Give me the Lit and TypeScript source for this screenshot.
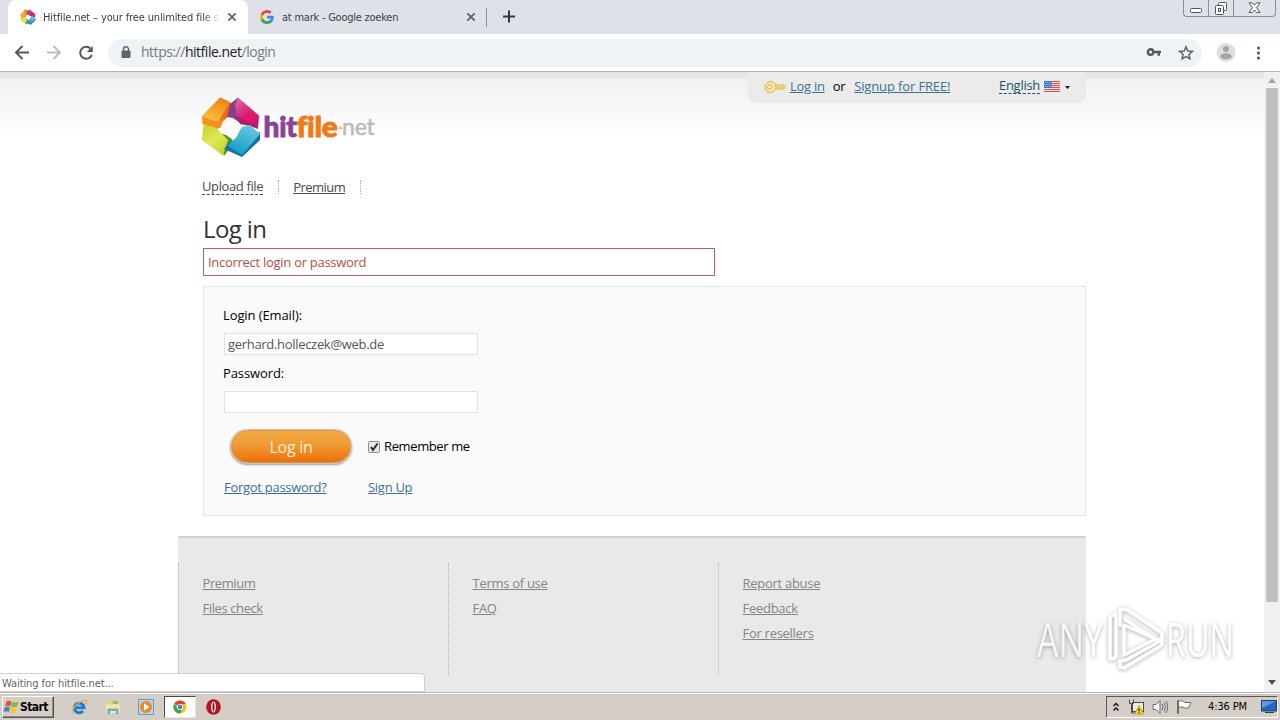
import { LitElement, css, html, svg } from "lit";

type FooterColumn = string[];

const footerColumns: FooterColumn[] = [
  ["Premium", "Files check"],
  ["Terms of use", "FAQ"],
  ["Report abuse", "Feedback", "For resellers"]
];

const logoMark = svg`
  <defs>
    <linearGradient id="orange" x1="0.8" y1="0" x2="0.3" y2="1">
      <stop offset="0" stop-color="#f07d15"></stop>
      <stop offset="1" stop-color="#fbc33c"></stop>
    </linearGradient>
    <linearGradient id="pink" x1="0.2" y1="0" x2="0.9" y2="1">
      <stop offset="0" stop-color="#d868a6"></stop>
      <stop offset="0.55" stop-color="#de1c70"></stop>
      <stop offset="1" stop-color="#e0115f"></stop>
    </linearGradient>
    <linearGradient id="blue" x1="0.7" y1="0" x2="0.3" y2="1">
      <stop offset="0" stop-color="#6cc8e0"></stop>
      <stop offset="1" stop-color="#109cc4"></stop>
    </linearGradient>
    <linearGradient id="lime" x1="0.2" y1="0" x2="0.8" y2="1">
      <stop offset="0" stop-color="#cbd52a"></stop>
      <stop offset="0.5" stop-color="#e2e65a"></stop>
      <stop offset="1" stop-color="#c3d11c"></stop>
    </linearGradient>
  </defs>
  <path fill="#ec6a12" d="M20 1.500 33 8 31 15 28 21 23 25 20 32 14 31 18 16Z"></path>
  <path fill="url(#orange)" d="M20 1.500 30 6 18 26 2 20Z"></path>
  <path fill="#f5901c" d="M2 20 18 26 24 21 20 32 15 33 2.500 28Z"></path>
  <path fill="#84408f" d="M38 1.500 30 8 27 21 33 22 40 27 44 17 43 8Z"></path>
  <path fill="#b51c68" d="M37 19 52 27 59 20 58 33 50 30 40 28Z"></path>
  <path fill="url(#pink)" d="M38 1.500 59.500 20 53 28 37 20 35 9Z"></path>
  <path fill="#4b9a2f" d="M17 32 19 37 26 39 32 43 33 48 24 60 20 50Z"></path>
  <path fill="url(#lime)" d="M3.500 28 16 32 28 44 23 59.500 2 44Z"></path>
  <path fill="#176fa8" d="M60 36 60 44 42 61 24 53 30 46Z"></path>
  <path fill="url(#blue)" d="M42 31 50 29 60 38 42 59 28 50 33 44 36 42 39 36Z"></path>
`;

@customElementSafe("hitfile-logo")
class HitfileLogo extends LitElement {
  static styles = css`
    :host {
      display: block;
      height: 62px;
      width: 180px;
    }

    .word {
      font-family: Lato, "Open Sans", sans-serif;
      font-size: 29px;
      font-weight: 900;
      stroke-width: 0.9;
    }

    .hit {
      fill: #8a4298;
      stroke: #8a4298;
    }

    .file {
      fill: #ef7b14;
      stroke: #ef7b14;
    }

    .net {
      fill: #b9b9bb;
      font-size: 24px;
      font-weight: 400;
      stroke: #b9b9bb;
      stroke-width: 0.5;
    }
  `;

  protected render() {
    return html`
      <svg width="180" height="62" viewBox="0 0 180 62">
        ${logoMark}
        <text class="word hit" x="63.500" y="40.500" textLength="33" lengthAdjust="spacingAndGlyphs">hit</text>
        <text class="word file" x="96.500" y="40.500" textLength="41" lengthAdjust="spacingAndGlyphs">file</text>
        <circle cx="140.500" cy="32" r="1.600" fill="#f0b27a"></circle>
        <text class="word net" x="142" y="39" textLength="32.500" lengthAdjust="spacingAndGlyphs">net</text>
      </svg>
    `;
  }
}

@customElementSafe("browser-chrome")
class BrowserChrome extends LitElement {
  static styles = css`
    :host {
      display: block;
      font: 11px/14px "DejaVu Sans Condensed", "DejaVu Sans", sans-serif;
      color: #3c4043;
    }

    svg {
      display: block;
      flex: none;
    }

    .tabs {
      align-items: stretch;
      background: #dee1e8;
      display: flex;
      height: 34px;
    }

    .tab {
      align-items: center;
      box-sizing: border-box;
      display: flex;
      padding-left: 12px;
      width: 240px;
    }

    .tab.active {
      background: #fff;
      border-radius: 8px 8px 0 0;
      margin-left: 8px;
    }

    .tab-title {
      letter-spacing: -0.13px;
      margin: 1px 0 0 7px;
      overflow: hidden;
      white-space: nowrap;
      width: 177px;
    }

    .tab.active .tab-title {
      -webkit-mask-image: linear-gradient(to right, #000 160px, transparent 178px);
    }

    .tab.other .tab-title {
      letter-spacing: -0.23px;
      margin-left: 8px;
      width: 184px;
    }

    .tab .close {
      margin-left: 7px;
    }

    .tab.other .close {
      margin-left: 0;
    }

    .divider {
      background: #8b8f96;
      margin: 8px 0 7px -2px;
      width: 1px;
    }

    .plus {
      margin: 10px 0 0 16px;
    }

    .window-buttons {
      border: 1px solid #8b8e94;
      border-radius: 0 0 4px 4px;
      border-top: 0;
      box-sizing: border-box;
      display: flex;
      height: 17px;
      margin-left: auto;
      margin-right: 4px;
    }

    .window-button {
      align-items: center;
      display: flex;
      justify-content: center;
      width: 24px;
    }

    .window-button + .window-button {
      border-left: 1px solid #8b8e94;
    }

    .window-button.exit {
      width: 41px;
    }

    .toolbar {
      align-items: center;
      background: #fff;
      border-bottom: 1px solid #b1b3b0;
      box-sizing: border-box;
      display: flex;
      height: 38px;
      padding: 0 12px;
    }

    .nav {
      display: flex;
      gap: 12px;
    }

    .omnibox {
      align-items: center;
      background: #f0f3f5;
      border-radius: 14px;
      box-sizing: border-box;
      display: flex;
      flex: none;
      height: 28px;
      margin-left: 12px;
      padding: 0 8px 0 10px;
      width: 1094px;
    }

    .url {
      color: #777b80;
      font: 14px/20px "Open Sans", sans-serif;
      letter-spacing: -0.48px;
      margin: -2px 0 0 7px;
    }

    .host {
      color: #202124;
    }

    .key {
      margin-left: auto;
      margin-right: 16px;
    }

    .avatar {
      margin-left: 14px;
    }

    .menu {
      margin-left: 15px;
    }
  `;

  private renderCross() {
    return html`
      <svg class="close" width="10" height="10" viewBox="0 0 10 10" stroke="#5f6368" stroke-width="1.800">
        <path d="M1.300 1.300l7.400 7.400M8.700 1.300l-7.400 7.400"></path>
      </svg>
    `;
  }

  protected render() {
    return html`
      <div class="tabs">
        <div class="tab active">
          <svg width="16" height="16" viewBox="0 0 62 62">${logoMark}</svg>
          <span class="tab-title">Hitfile.net – your free unlimited file s</span>
          ${this.renderCross()}
        </div>
        <div class="tab other">
          <svg width="14" height="14" viewBox="0 0 24 24">
            <path fill="#4285f4" d="M23.500 12.300c0-.8-.1-1.600-.2-2.300H12v4.500h6.500a5.500 5.500 0 0 1-2.400 3.600v3h3.900c2.200-2.100 3.500-5.100 3.500-8.800z"></path>
            <path fill="#34a853" d="M12 24c3.200 0 6-1.100 8-2.900l-3.900-3c-1.100.7-2.500 1.200-4.100 1.200-3.100 0-5.800-2.100-6.700-5H1.300v3.100A12 12 0 0 0 12 24z"></path>
            <path fill="#fbbc05" d="M5.300 14.300a7.200 7.200 0 0 1 0-4.600V6.600h-4a12 12 0 0 0 0 10.800z"></path>
            <path fill="#ea4335" d="M12 4.800c1.800 0 3.300.6 4.600 1.800L20 3.200A12 12 0 0 0 1.300 6.600l4 3.100c.9-2.900 3.600-4.900 6.700-4.900z"></path>
          </svg>
          <span class="tab-title">at mark - Google zoeken</span>
          ${this.renderCross()}
        </div>
        <div class="divider"></div>
        <svg class="plus" width="12" height="13" viewBox="0 0 12 13" stroke="#35383c" stroke-width="2">
          <path d="M6 .5v12M0 6.500h12"></path>
        </svg>
        <div class="window-buttons">
          <div class="window-button">
            <svg width="12" height="12" viewBox="0 0 12 12"><rect x="0.500" y="6.500" width="11" height="4" rx="1" fill="#fff" stroke="#50545c"></rect></svg>
          </div>
          <div class="window-button">
            <svg width="14" height="14" viewBox="0 0 14 14" fill="#fff" stroke="#50545c">
              <rect x="4.500" y="1.500" width="8" height="8" rx="1"></rect>
              <rect x="1.500" y="4.500" width="8" height="9" rx="1"></rect>
              <rect x="4.500" y="7.500" width="2" height="3"></rect>
            </svg>
          </div>
          <div class="window-button exit">
            <svg width="13" height="12" viewBox="0 0 13 12" fill="#fff" stroke="#50545c">
              <path d="M1 .8h3.300l2.200 2.400L8.700.8H12L8.600 5.700l3.400 4.800H8.700L6.500 8.100l-2.200 2.400H1l3.400-4.800z"></path>
            </svg>
          </div>
        </div>
      </div>
      <div class="toolbar">
        <div class="nav">
          <svg width="20" height="20" viewBox="0 0 20 20" fill="none" stroke="#55595d" stroke-width="2"><path d="M17 9.500H4M10.500 3 4 9.500l6.500 6.500"></path></svg>
          <svg width="20" height="20" viewBox="0 0 20 20" fill="none" stroke="#bcbec0" stroke-width="2"><path d="M3 9.500h13M9.500 3 16 9.500 9.500 16"></path></svg>
          <svg width="20" height="20" viewBox="0 0 20 20" fill="none" stroke="#55595d" stroke-width="2">
            <path d="M14.600 5.700A6 6 0 1 0 15.800 11.800"></path>
            <path d="M16.800 3v6h-6z" fill="#55595d" stroke="none"></path>
          </svg>
        </div>
        <div class="omnibox">
          <svg width="16" height="16" viewBox="0 0 16 16">
            <rect x="3.500" y="5.500" width="9" height="7.500" rx="1" fill="#5f6368"></rect>
            <path d="M5.500 6V4.300a2.500 2.500 0 0 1 5 0V6" fill="none" stroke="#5f6368" stroke-width="1.400"></path>
          </svg>
          <span class="url">https://<span class="host">hitfile.net</span>/login</span>
          <svg class="key" width="16" height="16" viewBox="0 0 16 16">
            <circle cx="4.600" cy="7" r="2.700" fill="none" stroke="#55595d" stroke-width="2.400"></circle>
            <path d="M7 5.800h8v2.400h-1v2.500h-2.500V8.200H7z" fill="#55595d"></path>
          </svg>
          <svg width="16" height="16" viewBox="0 0 16 16" fill="none" stroke="#5f6368" stroke-width="1.500">
            <path d="M8 1.800 9.800 6l4.500.4-3.400 3 1 4.400L8 11.500l-3.900 2.300 1-4.400-3.400-3L6.200 6z"></path>
          </svg>
        </div>
        <svg class="avatar" width="20" height="20" viewBox="0 0 20 20">
          <circle cx="10" cy="9.500" r="9.500" fill="#dedede"></circle>
          <circle cx="10" cy="6" r="3" fill="#a2a4a6"></circle>
          <ellipse cx="10" cy="13.300" rx="5.800" ry="3" fill="#a2a4a6"></ellipse>
        </svg>
        <svg class="menu" width="16" height="16" viewBox="0 0 16 16" fill="#4d5155">
          <circle cx="7.500" cy="3" r="1.500"></circle>
          <circle cx="7.500" cy="8" r="1.500"></circle>
          <circle cx="7.500" cy="13" r="1.500"></circle>
        </svg>
      </div>
    `;
  }
}

@customElementSafe("login-page")
class LoginPage extends LitElement {
  static styles = css`
    :host {
      background: linear-gradient(#e6e6e6 0 6px, #f1f1f1 7px, #fff 66px);
      display: flex;
      flex-direction: column;
      font: 13px/18px "Open Sans", "Noto Sans", sans-serif;
      letter-spacing: -0.28px;
      overflow: hidden;
    }

    svg {
      display: block;
      flex: none;
    }

    .wrap {
      box-sizing: border-box;
      display: flex;
      flex: 1;
      flex-direction: column;
      margin: 0 auto;
      width: 908px;
    }

    .link {
      color: #3a7190;
      text-decoration: underline;
    }

    .user-bar {
      align-items: center;
      align-self: flex-end;
      background: #ebebeb;
      border-radius: 0 0 8px 8px;
      box-sizing: border-box;
      display: flex;
      height: 31px;
      padding: 0 16px 4px;
      width: 338px;
    }

    .user-bar .key {
      margin: 2px 4px 0 0;
    }

    .or {
      margin: 0 9px 0 8px;
    }

    .signup {
      letter-spacing: -0.13px;
    }

    .language {
      border-bottom: 1px dashed #1f4e6b;
      color: #1f4e6b;
      line-height: 15px;
      margin-left: auto;
    }

    .flag {
      margin: 1px 5px 0 4px;
    }

    .caret {
      margin-top: 4px;
    }

    .logo {
      margin: -7px 0 0 22px;
    }

    .menu {
      align-items: center;
      color: #4a4a4a;
      display: flex;
      height: 20px;
      margin: 19px 0 0 24px;
    }

    .menu-item {
      border-bottom: 1px dashed #4a4a4a;
      letter-spacing: -0.38px;
      line-height: 15px;
    }

    .menu-item.plain {
      border-bottom: 0;
      letter-spacing: -0.54px;
      line-height: 16px;
      text-decoration: underline;
    }

    .menu-divider {
      border-left: 1px dotted #aaa;
      height: 14px;
      margin: 0 14px 0 15px;
    }

    .title {
      color: #333;
      font: 24px/30px "Open Sans", "Noto Sans", sans-serif;
      letter-spacing: -0.6px;
      margin: 17px 0 0 25px;
    }

    .error {
      border: 1px solid #cd5a5a;
      box-sizing: border-box;
      color: #bf4b44;
      height: 28px;
      line-height: 27px;
      margin: 4px 0 0 25px;
      padding-left: 4px;
      width: 512px;
    }

    .form {
      background: #fafafa;
      border: 1px solid #e6e6e6;
      box-sizing: border-box;
      color: #000;
      display: flex;
      flex-direction: column;
      height: 230px;
      margin: 10px 0 0 25px;
      padding: 19px 20px 0 19px;
    }

    .field {
      display: block;
      height: 58px;
    }

    .label {
      letter-spacing: -0.1px;
    }

    .input {
      background: #fff;
      border: 1px solid #e2e2e2;
      box-sizing: border-box;
      color: #555;
      display: block;
      height: 22px;
      letter-spacing: -0.31px;
      line-height: 21px;
      margin: 9px 0 0 1px;
      padding-left: 3px;
      width: 254px;
    }

    .actions {
      align-items: center;
      display: flex;
      height: 38px;
      margin-top: 5px;
    }

    .submit {
      background: linear-gradient(#f2ac43, #ed9a35 45%, #f07c15 85%, #e37312);
      border: 1px solid #d98f45;
      border-radius: 18px;
      box-shadow: 0 0 1px 1px #d8c5ac, 0 1px 2px 1px #999;
      box-sizing: border-box;
      color: #fff3cf;
      font: 16px/33px "Open Sans", sans-serif;
      height: 33px;
      letter-spacing: -0.3px;
      margin-left: 8px;
      padding: 0;
      text-align: center;
      width: 120px;
    }

    .checkbox {
      margin: 2px 4px 0 17px;
    }

    .remember {
      letter-spacing: -0.38px;
    }

    .links {
      display: flex;
      margin: 13px 0 0 1px;
    }

    .forgot {
      width: 144px;
    }

    .footer {
      background: #e9e9e9;
      border-top: 2px solid #d2d2d2;
      box-sizing: border-box;
      display: flex;
      flex: 1;
      margin-top: 20px;
      padding-top: 25px;
    }

    .column {
      border-left: 1px dotted #b5b5b5;
      box-sizing: border-box;
      color: #858585;
      display: flex;
      flex-direction: column;
      gap: 7px;
      height: 112px;
      padding: 11px 0 0 23.5px;
      width: 270px;
    }

    .column-link {
      text-decoration: underline;
    }

    .column:first-child .column-link {
      letter-spacing: -0.4px;
    }
  `;

  protected render() {
    return html`
      <div class="wrap">
        <div class="user-bar">
          <svg class="key" width="22" height="14" viewBox="0 0 22 14" fill="#fbe3a0" stroke="#d9b34d">
            <path d="M11.500 5H20l1.500 1.700L20 9h-8.500M12 7h8"></path>
            <circle cx="6.500" cy="7" r="5.500"></circle>
            <circle cx="5.500" cy="7" r="2" fill="#fff6d8"></circle>
          </svg>
          <span class="link">Log in</span>
          <span class="or">or</span>
          <span class="link signup">Signup for FREE!</span>
          <span class="language">English</span>
          <svg class="flag" width="16" height="11" viewBox="0 0 16 11">
            <rect width="16" height="11" fill="#f6e3df"></rect>
            <path d="M0 .5h16M0 2.500h16M0 4.500h16M0 6.500h16M0 8.500h16M0 10.500h16" stroke="#d9534a"></path>
            <rect width="8" height="7" fill="#3f74d8"></rect>
            <path d="M1 1.500h7M0 3.500h7M1 5.500h7" stroke="#a9c4f5" stroke-dasharray="1 1"></path>
          </svg>
          <svg class="caret" width="5" height="3" viewBox="0 0 5 3"><path d="M0 0h5L2.500 3z" fill="#111"></path></svg>
        </div>
        <hitfile-logo class="logo"></hitfile-logo>
        <div class="menu">
          <span class="menu-item">Upload file</span>
          <span class="menu-divider"></span>
          <span class="menu-item plain">Premium</span>
          <span class="menu-divider"></span>
        </div>
        <div class="title">Log in</div>
        <div class="error">Incorrect login or password</div>
        <div class="form">
          <label class="field"><span class="label">Login (Email):</span><span class="input">gerhard.holleczek@web.de</span></label>
          <label class="field"><span class="label">Password:</span><span class="input"></span></label>
          <div class="actions">
            <button class="submit">Log in</button>
            <svg class="checkbox" width="12" height="12" viewBox="0 0 12 12">
              <rect x="0.500" y="0.500" width="11" height="11" rx="1" fill="#e8e8e8" stroke="#8e8e8e"></rect>
              <path d="M3 6l2 3 4.500-6.500" fill="none" stroke="#2b2b2b" stroke-width="2"></path>
            </svg>
            <span class="remember">Remember me</span>
          </div>
          <div class="links">
            <span class="forgot"><span class="link">Forgot password?</span></span>
            <span class="link">Sign Up</span>
          </div>
        </div>
        <div class="footer">
          ${footerColumns.map(
            (links) => html`<div class="column">${links.map((link) => html`<span><span class="column-link">${link}</span></span>`)}</div>`
          )}
        </div>
      </div>
    `;
  }
}

@customElementSafe("task-bar")
class TaskBar extends LitElement {
  static styles = css`
    :host {
      align-items: center;
      background: #d5cec6;
      border-top: 1px solid #b9b8b2;
      box-shadow: inset 0 1px #fff, inset 0 2px #c9c7bf;
      box-sizing: border-box;
      display: flex;
      font: 11px/14px "DejaVu Sans Condensed", sans-serif;
      height: 28px;
      padding: 0 2px;
    }

    svg {
      display: block;
      flex: none;
    }

    .start {
      align-items: center;
      border: 1px solid;
      border-color: #fff #55524e #55524e #fff;
      box-shadow: inset -1px -1px #8f8a84;
      box-sizing: border-box;
      display: flex;
      font-size: 12px;
      font-weight: bold;
      gap: 1px;
      height: 22px;
      letter-spacing: -0.55px;
      width: 52px;
    }

    .programs {
      display: flex;
      margin-left: 9px;
    }

    .program {
      align-items: center;
      box-sizing: border-box;
      display: flex;
      height: 22px;
      justify-content: center;
      margin-right: 1.5px;
      width: 32px;
    }

    .program.active {
      background: #fff;
      border: 1px solid;
      border-color: #4a4845 #e8e4de #e8e4de #4a4845;
    }

    .tray {
      align-items: center;
      border: 1px solid;
      border-color: #5b5955 #fff #fff #5b5955;
      box-sizing: border-box;
      display: flex;
      height: 22px;
      margin-left: auto;
      padding: 0 0 0 6px;
      width: 172px;
    }

    .network {
      margin-left: 9px;
    }

    .sound,
    .flag {
      margin-left: 8px;
    }

    .clock {
      letter-spacing: -0.12px;
      margin-left: 16px;
    }

    .desktop {
      margin-left: auto;
    }
  `;

  protected render() {
    return html`
      <div class="start">
        <svg width="16" height="16" viewBox="0 0 16 16">
          <path fill="#e6532a" d="M3.500 2.500Q6 1 8.500 2.700L7.200 7.500Q5 6 2 7.300z"></path>
          <path fill="#7db93c" d="M9.200 3Q12 4.500 15.500 2.500L14 7.500Q11 9 8 7.700z"></path>
          <path fill="#3e7fd0" d="M1.800 8.200Q4.500 7 7 8.500L5.600 13Q3.500 11.700.5 13z"></path>
          <path fill="#f7c52c" d="M7.800 8.700Q10.500 10 13.700 8.400L12.300 13Q9.500 15 6.400 13.500z"></path>
        </svg>
        <span>Start</span>
      </div>
      <div class="programs">
        <div class="program">
          <svg width="17" height="16" viewBox="0 0 17 16" fill="none">
            <path d="M3.500 8.800H13A4.800 4.800 0 1 0 12 12" stroke="#1f7fd1" stroke-width="3"></path>
            <path d="M2 14.500Q-1 12 6 5.500 13 0 15.500 1.500 16.500 2.500 14.500 5" stroke="#e0b53a" stroke-width="1.300"></path>
          </svg>
        </div>
        <div class="program">
          <svg width="16" height="16" viewBox="0 0 16 16">
            <path d="M1 2h5l1 2h7v10H1z" fill="#ecd478"></path>
            <path d="M8 2h5v3H8z" fill="#8bbf72"></path>
            <path d="M0.500 5.500h14l.500 8.500H1.500z" fill="#f6e8a4"></path>
            <path d="M2.500 15V9.500h11V15h-2.500v-3H5v3z" fill="#65aede"></path>
          </svg>
        </div>
        <div class="program">
          <svg width="16" height="16" viewBox="0 0 16 16">
            <rect x="0.500" y="0.500" width="15" height="15" fill="#b9d4ec" stroke="#5f9bd0"></rect>
            <circle cx="8" cy="8" r="6" fill="#f18a1e"></circle>
            <path d="M6 4.500 11.500 8 6 11.500z" fill="#fff"></path>
          </svg>
        </div>
        <div class="program active">
          <svg width="14" height="14" viewBox="0 0 14 14">
            <circle cx="7" cy="7" r="6.500" fill="#fbc116"></circle>
            <path d="M7 7 1.300 3.800A6.500 6.500 0 0 1 12.700 3.900H7z" fill="#e2402f"></path>
            <path d="M1.300 3.800A6.500 6.500 0 0 0 7 13.500L9 9.500 4.300 8.600z" fill="#36a350"></path>
            <circle cx="7" cy="7" r="3.100" fill="#fff"></circle>
            <circle cx="7" cy="7" r="2.400" fill="#4384ea"></circle>
          </svg>
        </div>
        <div class="program">
          <svg width="15" height="16" viewBox="0 0 15 16">
            <ellipse cx="7.500" cy="8" rx="7.300" ry="7.700" fill="#b5151b"></ellipse>
            <ellipse cx="7.500" cy="8" rx="2.400" ry="5.500" fill="#fff"></ellipse>
            <ellipse cx="7.500" cy="8" rx="1" ry="4.500" fill="#7d0d12"></ellipse>
          </svg>
        </div>
      </div>
      <div class="tray">
        <svg width="6" height="10" viewBox="0 0 6 10" fill="none" stroke="#111" stroke-width="1.400"><path d="M.5 4 3 1.500 5.500 4M.5 8.500 3 6l2.500 2.500"></path></svg>
        <svg class="network" width="16" height="16" viewBox="0 0 16 16">
          <rect x="4.500" y="3.500" width="11" height="9" fill="#e9e9e9" stroke="#4b4b4b"></rect>
          <path d="M1.500.5v4h4v-4M3.500 4.500v9.500h6" fill="none" stroke="#4b4b4b"></path>
          <path d="M11 6.500l4.500 8.500h-9z" fill="#fcd716" stroke="#a88a10" stroke-width=".6"></path>
          <path d="M11 9.500v2.800M11 13.300v1" stroke="#111" stroke-width="1.200"></path>
        </svg>
        <svg class="sound" width="16" height="16" viewBox="0 0 16 16" fill="none" stroke="#6d6d6d">
          <path d="M1 5.500h3L8 1.500v13l-4-4H1z" fill="#f4f4f4"></path>
          <path d="M10 5q2 3 0 6M12 3.500q3 4.500 0 9M14 2q3.500 6 0 12"></path>
        </svg>
        <svg class="flag" width="16" height="16" viewBox="0 0 16 16" fill="#fff" stroke="#6d6d6d">
          <path d="M1.500 14.500V1.500h1v13z"></path>
          <path d="M2.500 2q3-1 5 .5l1.500 1h6l-2.500 5.500H8.500q-3-2-6-.5z"></path>
        </svg>
        <span class="clock">4:36 PM</span>
        <svg class="desktop" width="16" height="14" viewBox="0 0 16 14">
          <rect x="0.500" y="0.500" width="15" height="10.500" fill="#2368bd" stroke="#15427e"></rect>
          <path d="M1 1h14L1 8z" fill="#5a9be0"></path>
          <path d="M4 12.500h9" stroke="#3a3a3a"></path>
        </svg>
      </div>
    `;
  }
}

@customElementSafe("app-root")
class AppRoot extends LitElement {
  static styles = css`
    :host {
      display: flex;
      flex-direction: column;
      height: 720px;
      overflow: hidden;
      position: relative;
      width: 1280px;
    }

    .viewport {
      display: flex;
      height: 620px;
    }

    .page {
      flex: 1;
    }

    .scrollbar {
      align-items: center;
      background: #f1f1f1;
      display: flex;
      flex-direction: column;
      width: 16px;
    }

    .thumb {
      background: #c1c1c1;
      height: 514px;
      width: 12px;
    }

    .arrow {
      display: block;
      margin: 6px 0 5px;
    }

    .arrow.down {
      margin: auto 0 7px;
    }

    .status {
      background: #fff;
      border: 1px solid #cfcfcf;
      border-left: 0;
      border-radius: 0 4px 0 0;
      bottom: 28px;
      box-sizing: border-box;
      color: #5f6368;
      font: 11px/20px "DejaVu Sans Condensed", sans-serif;
      height: 19px;
      left: 0;
      letter-spacing: -0.08px;
      padding-left: 2px;
      position: absolute;
      width: 425px;
    }

    .watermark {
      bottom: 45px;
      filter: drop-shadow(0 1px 2px rgba(0, 0, 0, 0.5));
      left: 1032px;
      opacity: 0.62;
      position: absolute;
    }

    .watermark-text {
      fill: #fff;
      font: 400 47px/70px "Open Sans", sans-serif;
    }
  `;

  protected render() {
    return html`
      <browser-chrome></browser-chrome>
      <div class="viewport">
        <login-page class="page"></login-page>
        <div class="scrollbar">
          <svg class="arrow" width="8" height="5" viewBox="0 0 8 5"><path d="M0 5h8L4 0z" fill="#a3a3a3"></path></svg>
          <div class="thumb"></div>
          <svg class="arrow down" width="8" height="5" viewBox="0 0 8 5"><path d="M0 0h8L4 5z" fill="#505050"></path></svg>
        </div>
      </div>
      <task-bar></task-bar>
      <div class="status">Waiting for hitfile.net...</div>
      <svg class="watermark" width="216" height="76" viewBox="0 -4 216 76">
        <text class="watermark-text" x="5" y="54" textLength="66" lengthAdjust="spacingAndGlyphs">ANY</text>
        <text class="watermark-text" x="134" y="54" textLength="68" lengthAdjust="spacingAndGlyphs">RUN</text>
        <g fill="none" stroke="#fff" stroke-width="3.500" stroke-linejoin="round">
          <path d="M84 55V11L78 14v42l6-1"></path>
          <path d="M88 24V7l6-1 36 24v6l-6 1L92 16"></path>
          <path d="M92 22v30l32-16z"></path>
          <path d="M88 58v6l4 1 38-23v-5L94 57z"></path>
        </g>
      </svg>
    `;
  }
}

// Registering twice throws, which happens when the bundle is loaded again.
function customElementSafe(name: string) {
  return (target: CustomElementConstructor): void => {
    if (!customElements.get(name)) {
      customElements.define(name, target);
    }
  };
}
